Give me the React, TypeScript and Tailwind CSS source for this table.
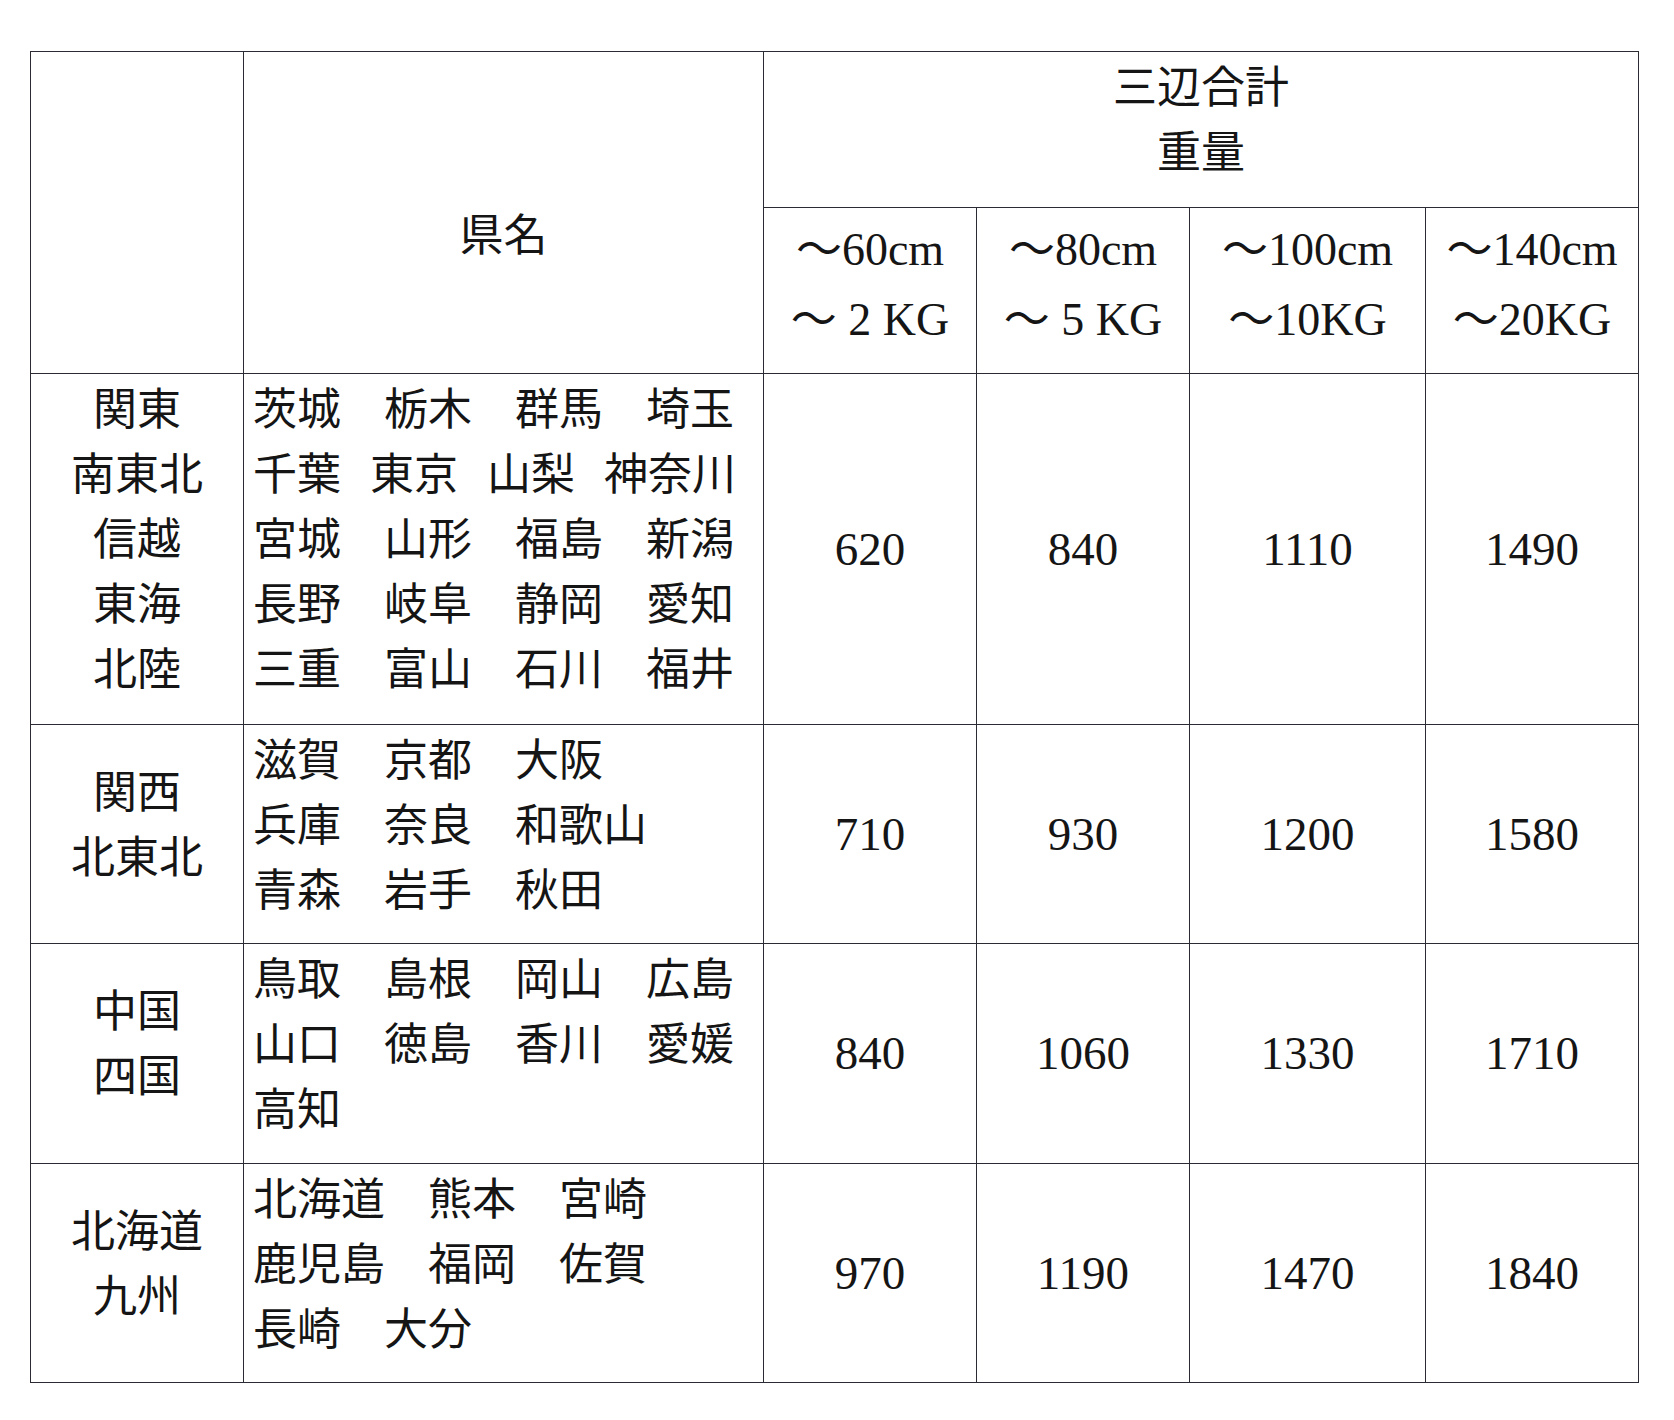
const jp = "font-['Noto_Sans_CJK_JP','Noto_Sans_CJK_SC',sans-serif]";
const serif = "font-['Liberation_Serif','Noto_Sans_CJK_JP',serif]";

interface Block {
  region: string[];
  lines: { items: string[]; tight?: boolean }[];
  prices: number[];
}

const headers = [
  ["～60cm", "～ 2 KG"],
  ["～80cm", "～ 5 KG"],
  ["～100cm", "～10KG"],
  ["～140cm", "～20KG"],
];

const blocks: Block[] = [
  {
    region: ["関東", "南東北", "信越", "東海", "北陸"],
    lines: [
      { items: ["茨城", "栃木", "群馬", "埼玉"] },
      { items: ["千葉", "東京", "山梨", "神奈川"], tight: true },
      { items: ["宮城", "山形", "福島", "新潟"] },
      { items: ["長野", "岐阜", "静岡", "愛知"] },
      { items: ["三重", "富山", "石川", "福井"] },
    ],
    prices: [620, 840, 1110, 1490],
  },
  {
    region: ["関西", "北東北"],
    lines: [
      { items: ["滋賀", "京都", "大阪"] },
      { items: ["兵庫", "奈良", "和歌山"] },
      { items: ["青森", "岩手", "秋田"] },
    ],
    prices: [710, 930, 1200, 1580],
  },
  {
    region: ["中国", "四国"],
    lines: [
      { items: ["鳥取", "島根", "岡山", "広島"] },
      { items: ["山口", "徳島", "香川", "愛媛"] },
      { items: ["高知"] },
    ],
    prices: [840, 1060, 1330, 1710],
  },
  {
    region: ["北海道", "九州"],
    lines: [
      { items: ["北海道", "熊本", "宮崎"] },
      { items: ["鹿児島", "福岡", "佐賀"] },
      { items: ["長崎", "大分"] },
    ],
    prices: [970, 1190, 1470, 1840],
  },
];

// each cell draws its own right and bottom rule, the grid draws left and top
const cell = "border-r border-b border-[#2b2b33]";

const Region = ({ lines }: { lines: string[] }) => (
  <div className={`${cell} ${jp} flex flex-col items-center justify-center pb-[25px] text-[44px] leading-[65px]`}>
    {lines.map((l) => (
      <div key={l}>{l}</div>
    ))}
  </div>
);

const Prefectures = ({ lines }: { lines: Block["lines"] }) => (
  <div className={`${cell} ${jp} flex flex-col pl-[9px] text-[44px] leading-[65px]`}>
    {lines.map((line, i) => (
      <div key={i} className={`flex ${line.tight ? "gap-[29px]" : "gap-[43px]"}`}>
        {line.items.map((p) => (
          <span key={p}>{p}</span>
        ))}
      </div>
    ))}
  </div>
);

export default function App() {
  return (
    <div className="min-h-[1420px] w-[1674px] bg-white pt-[51px] pl-[30px] text-[#151515]">
      <div className="grid w-max grid-cols-[213px_520px_213px_213px_236px_213px] grid-rows-[156px_166px_351px_219px_220px_219px] border-l border-t border-[#2b2b33]">
        {/* header */}
        <div className={`${cell} row-span-2`} />
        <div className={`${cell} ${jp} row-span-2 flex items-center justify-center pt-[40px] text-[44px] leading-[65px]`}>
          県名
        </div>
        <div className={`${cell} ${jp} col-span-4 flex flex-col items-center justify-center pb-[25px] text-[44px] leading-[65px]`}>
          <div>三辺合計</div>
          <div>重量</div>
        </div>
        {headers.map(([size, weight]) => (
          <div
            key={size}
            className={`${cell} ${serif} flex flex-col items-center justify-center pb-[11px] text-[46px] leading-[70px] whitespace-pre`}
          >
            <div>{size}</div>
            <div>{weight}</div>
          </div>
        ))}

        {/* body */}
        {blocks.map((b) => (
          <div key={b.region[0]} className="contents">
            <Region lines={b.region} />
            <Prefectures lines={b.lines} />
            {b.prices.map((p, i) => (
              <div key={i} className={`${cell} ${serif} flex items-center justify-center text-[47px] leading-none`}>
                {p}
              </div>
            ))}
          </div>
        ))}
      </div>
    </div>
  );
}
